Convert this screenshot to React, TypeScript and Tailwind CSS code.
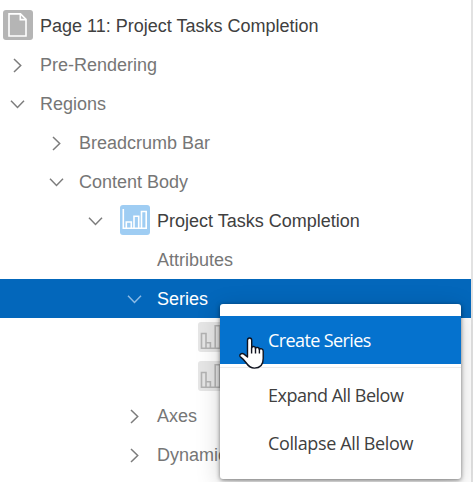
import type { ReactNode } from 'react';

function Chevron({ open, light }: { open?: boolean; light?: boolean }) {
  return (
    <svg
      width="16"
      height="16"
      viewBox="0 0 16 16"
      fill="none"
      strokeWidth="1.5"
      className={light ? 'stroke-[#8dbbe6]' : 'stroke-[#7c7c7c]'}
    >
      <path d={open ? 'M2 4.8 L8.5 11.5 L15 4.8' : 'M5 2 L11.7 8.5 L5 15'} />
    </svg>
  );
}

function PageIcon() {
  return (
    <svg width="30" height="30" viewBox="0 0 30 30" fill="none" stroke="#fff" strokeWidth="1.6" className="rounded-[3px] bg-[#b5b5b5]">
      <path d="M6 3.9 H17.5 L23 9.4 V26 H6 Z" />
      <path d="M17.3 3.9 V9.6 H23" />
    </svg>
  );
}

function ChartIcon() {
  return (
    <svg width="30" height="30" viewBox="0 0 30 30" fill="none" stroke="#fff" strokeWidth="1.6" className="rounded-[3px] bg-[#9fcdf3]">
      <path d="M3.3 4 V23.2 H27" />
      <path d="M6.3 23 V17 H11.3 V23 M14 23 V11.3 H18.7 V23 M21.5 23 V6.5 H26.2 V23" />
    </svg>
  );
}

function SeriesIcon() {
  return (
    <svg width="30" height="30" viewBox="0 0 30 30" fill="none" stroke="#b3b3b3" strokeWidth="1.6" className="rounded-[3px] bg-[#e6e6e6]">
      <path d="M3.5 26.2 V11.5 H8 V26.2 Z M8 20.7 H12.4 V26.2 H8 M17.2 26.2 V3.7 H22 V26.2 Z M12.4 26.2 H17.2" />
    </svg>
  );
}

type RowProps = {
  label?: string;
  indent: string;
  state?: 'open' | 'closed';
  icon?: ReactNode;
  strong?: boolean;
  selected?: boolean;
};

function Row({ label, indent, state, icon, strong, selected }: RowProps) {
  const tone = selected ? 'bg-[#0367bb] text-white' : strong ? 'text-[#404040]' : 'text-[#767676]';
  return (
    <div className={`flex h-[39px] items-center ${indent} ${tone}`}>
      {state && (
        <span className={`shrink-0 ${icon ? 'mr-[17px]' : 'mr-[15px]'}`}>
          <Chevron open={state === 'open'} light={selected} />
        </span>
      )}
      {icon && <span className="mb-px mr-[7px] shrink-0">{icon}</span>}
      <span className="whitespace-nowrap pt-0.5">{label}</span>
    </div>
  );
}

function Pointer() {
  return (
    <svg width="26" height="34" viewBox="0 0 26 34" className="absolute left-[19px] top-[32px]">
      <path
        d="M8.5 21 V4.3 C8.5 1.2 12.7 1.2 12.7 4.3 V11.8 C13.2 10 16.4 10.1 16.5 12.4 C17.3 10.8 20.3 11.2 20.4 13.4 C21.5 12.1 24.2 12.9 24.2 15.2 V22.5 C24.2 29 20.5 32.1 15.4 32.1 C11.4 32.1 9.1 29.8 6.9 26.5 C5.2 24 3.3 22.4 1.4 20.9 C-0.4 19.4 2.1 16.5 5 18.1 L8.5 21 Z"
        fill="#fff"
        stroke="#10131f"
        strokeWidth="1.4"
        strokeLinejoin="round"
      />
      <path d="M12.6 11.5 V17.5 M16.5 12 V17.5 M20.4 13 V17.5" fill="none" stroke="#10131f" strokeWidth="1.4" />
    </svg>
  );
}

function ContextMenu() {
  return (
    <div className="absolute left-[220px] top-[304px] h-[175px] w-[241px] rounded-[3px] bg-white pt-3 font-['Open_Sans','Noto_Sans',sans-serif] text-[18px] text-[#404040] shadow-[0_1px_4px_rgba(0,0,0,0.5),0_5px_24px_rgba(0,0,0,0.18)]">
      <div className="flex h-12 items-center bg-[#0572ce] pl-12 tracking-[-0.6px] text-white">Create Series</div>
      <div className="mb-1 mt-[3px] h-px bg-[#ebebeb]" />
      <div className="flex h-12 items-center pb-0.5 pl-12 tracking-[-0.5px]">Expand All Below</div>
      <div className="flex h-12 items-center pb-0.5 pl-12 tracking-[-0.38px]">Collapse All Below</div>
      <Pointer />
    </div>
  );
}

export default function App() {
  return (
    <div className="relative h-[482px] w-[473px] overflow-hidden bg-white font-['Liberation_Sans',Arial,sans-serif] text-[18px]">
      <div className="h-full w-full border-r-2 border-[#e2e2e2] pt-1.5">
        <Row label="Page 11: Project Tasks Completion" indent="pl-[3px]" icon={<PageIcon />} strong />
        <Row label="Pre-Rendering" indent="pl-[9px]" state="closed" />
        <Row label="Regions" indent="pl-[9px]" state="open" />
        <Row label="Breadcrumb Bar" indent="pl-12" state="closed" />
        <Row label="Content Body" indent="pl-12" state="open" />
        <Row label="Project Tasks Completion" indent="pl-[87px]" state="open" strong icon={<ChartIcon />} />
        <Row label="Attributes" indent="pl-[157px]" />
        <Row label="Series" indent="pl-[126px]" state="open" selected />
        <Row indent="pl-[198px]" icon={<SeriesIcon />} />
        <Row indent="pl-[198px]" icon={<SeriesIcon />} />
        <Row label="Axes" indent="pl-[126px]" state="closed" />
        <Row label="Dynamic" indent="pl-[126px]" state="closed" />
      </div>
      <ContextMenu />
    </div>
  );
}
